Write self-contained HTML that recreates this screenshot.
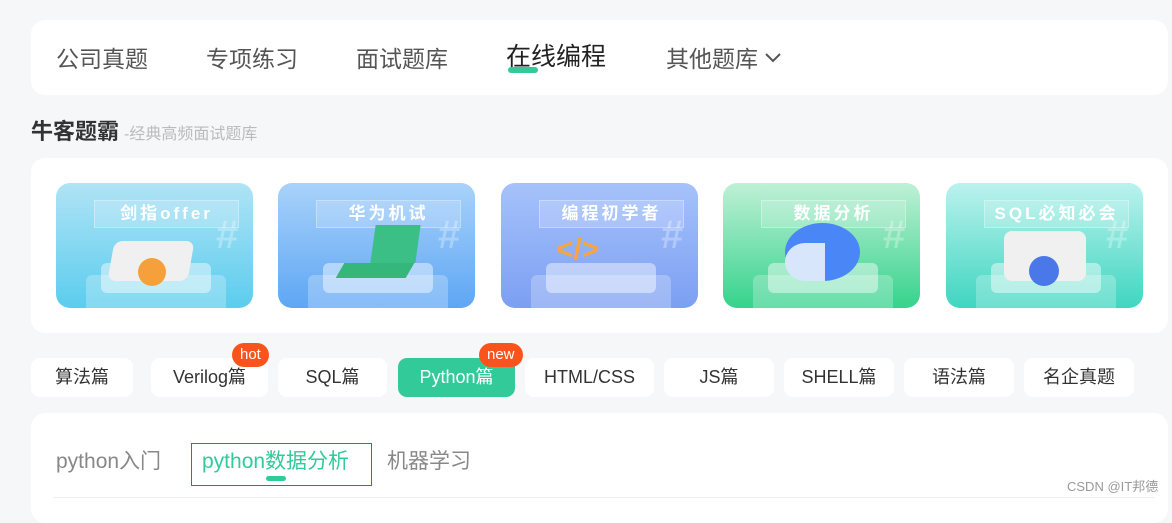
<!DOCTYPE html>
<html><head><meta charset="utf-8"><style>
*{margin:0;padding:0;box-sizing:border-box}
body{width:1172px;height:500px;overflow:hidden;background:#f6f7f9;font-family:"Liberation Sans","Noto Sans CJK SC",sans-serif;position:relative}
.p{position:absolute;background:#fff;border-radius:14px}
.nav span{position:absolute;top:24px;font-size:23px;color:#555;line-height:30px}
.card{position:absolute;top:183px;width:197px;height:125px;border-radius:14px;overflow:hidden}
.card .t{position:absolute;left:38px;top:17px;width:145px;height:28px;background:rgba(255,255,255,.18);border:1px solid rgba(255,255,255,.3);color:#fff;font-weight:bold;font-size:17px;letter-spacing:3px;text-align:center;line-height:26px}
.card .b1{position:absolute;left:30px;top:92px;width:140px;height:40px;background:rgba(255,255,255,.25);border-radius:6px}
.card .b2{position:absolute;left:45px;top:80px;width:110px;height:30px;background:rgba(255,255,255,.45);border-radius:6px}
.card .h{position:absolute;left:160px;top:30px;font-size:40px;font-weight:bold;color:rgba(255,255,255,.3)}
.tab{position:absolute;top:358px;height:39px;background:#fff;border-radius:9px;font-size:18px;color:#333;text-align:center;line-height:39px}
.badge{position:absolute;top:343px;height:24px;border-radius:12px;background:#fa541c;color:#fff;font-size:15px;line-height:23px;padding:0 8px}
.sub{position:absolute;top:448px;font-size:21px;color:#888;line-height:28px}
</style></head><body>
<div class="p nav" style="left:31px;top:20px;width:1137px;height:75px">
<span style="left:25px">公司真题</span>
<span style="left:175px">专项练习</span>
<span style="left:325px">面试题库</span>
<span style="left:475px;color:#222;font-size:25px;top:22px">在线编程</span>
<div style="position:absolute;left:477px;top:47px;width:30px;height:6px;border-radius:3px;background:#32ca99"></div>
<span style="left:635px">其他题库 <svg width="18" height="12" viewBox="0 0 18 12" style="vertical-align:3px"><path d="M2 2 L9 9 L16 2" fill="none" stroke="#555" stroke-width="2"/></svg></span>
</div>
<div style="position:absolute;left:31px;top:117px;font-size:22px;font-weight:bold;color:#333;line-height:30px">牛客题霸<span style="font-size:16px;font-weight:normal;color:#bbb;margin-left:5px">-经典高频面试题库</span></div>
<div class="p" style="left:31px;top:158px;width:1137px;height:175px"></div>
<div class="card" style="left:56px;background:linear-gradient(180deg,#b0e3f5,#5bcdee)"><div class="t">剑指offer</div><div class="b1"></div><div class="b2"></div><div class="h">#</div><div style="position:absolute;left:55px;top:58px;width:80px;height:40px;background:#f0f0f0;border-radius:8px;transform:skewX(-10deg)"></div><div style="position:absolute;left:82px;top:75px;width:28px;height:28px;border-radius:50%;background:#f5a03a"></div></div>
<div class="card" style="left:278px;background:linear-gradient(180deg,#a9d2fa,#5ea6f4)"><div class="t">华为机试</div><div class="b1"></div><div class="b2"></div><div class="h">#</div><div style="position:absolute;left:95px;top:42px;width:45px;height:38px;background:#3bbf86;transform:skewX(-8deg)"></div><div style="position:absolute;left:62px;top:80px;width:70px;height:15px;background:#35b77c;transform:skewX(-30deg)"></div></div>
<div class="card" style="left:501px;background:linear-gradient(180deg,#a6c2fb,#7c9ff2)"><div class="t">编程初学者</div><div class="b1"></div><div class="b2"></div><div class="h">#</div><div style="position:absolute;left:55px;top:50px;width:80px;height:45px;color:#f7a541;font-size:30px;font-weight:bold">&lt;/&gt;</div></div>
<div class="card" style="left:723px;background:linear-gradient(180deg,#bff0d6,#35d38c)"><div class="t">数据分析</div><div class="b1"></div><div class="b2"></div><div class="h">#</div><div style="position:absolute;left:62px;top:40px;width:75px;height:58px;border-radius:50%;background:#4b86f7"></div><div style="position:absolute;left:62px;top:60px;width:40px;height:38px;background:#d8e6fc;border-radius:50% 0 0 50%"></div></div>
<div class="card" style="left:946px;background:linear-gradient(180deg,#bcf2ee,#3fd6c0)"><div class="t">SQL必知必会</div><div class="b1"></div><div class="b2"></div><div class="h">#</div><div style="position:absolute;left:58px;top:48px;width:82px;height:50px;background:#f0f0f0;border-radius:8px"></div><div style="position:absolute;left:83px;top:73px;width:30px;height:30px;border-radius:50%;background:#4a78e8"></div></div>
<div class="tab" style="left:31px;width:102px">算法篇</div>
<div class="tab" style="left:151px;width:117px">Verilog篇</div>
<div class="tab" style="left:278px;width:109px">SQL篇</div>
<div class="tab" style="left:398px;width:117px;background:#32ca99;color:#fff">Python篇</div>
<div class="tab" style="left:525px;width:129px">HTML/CSS</div>
<div class="tab" style="left:664px;width:110px">JS篇</div>
<div class="tab" style="left:784px;width:110px">SHELL篇</div>
<div class="tab" style="left:904px;width:110px">语法篇</div>
<div class="tab" style="left:1024px;width:110px">名企真题</div>
<div class="badge" style="left:232px">hot</div>
<div class="badge" style="left:479px">new</div>
<div class="p" style="left:31px;top:413px;width:1137px;height:110px"></div>
<div class="sub" style="left:56px">python入门</div>
<div style="position:absolute;left:191px;top:443px;width:181px;height:43px;border:1px solid #d33"></div>
<div class="sub" style="left:202px;color:#32ca99">python数据分析</div>
<div style="position:absolute;left:266px;top:476px;width:20px;height:5px;border-radius:3px;background:#32ca99"></div>
<div class="sub" style="left:387px">机器学习</div>
<div style="position:absolute;left:54px;top:497px;width:1100px;height:1px;background:#eee"></div>
<div style="position:absolute;left:1067px;top:476px;font-size:13px;color:#999">CSDN @IT邦德</div>
</body></html>
